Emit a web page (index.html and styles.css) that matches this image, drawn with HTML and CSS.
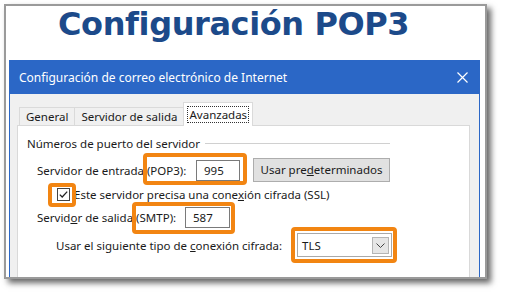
FILE: index.html
```html
<!DOCTYPE html>
<html lang="es">
<head>
<meta charset="utf-8">
<title>Configuración POP3</title>
<link rel="stylesheet" href="styles.css">
</head>
<body>
<div class="frame">
  <h1 class="heading">Configuración POP3</h1>
  <div class="dialog">
    <div class="titlebar">
      <span>Configuración de correo electrónico de Internet</span>
      <svg class="close" viewBox="0 0 11 11" aria-hidden="true"><path d="M0.5 0.5 L10.5 10.5 M10.5 0.5 L0.5 10.5" stroke="#fff" stroke-width="1.2" fill="none"/></svg>
    </div>
    <div class="body">
      <div class="tabs">
        <div class="tab">General</div>
        <div class="tab">Servidor de salida</div>
        <div class="tab active"><span class="focus">Avanzadas</span></div>
      </div>
      <div class="panel">
        <div class="group-title"><span>Números de puerto del servidor</span></div>
        <div class="row row-in">
          <span class="lbl lbl-in">Servidor de entrada (POP3):</span>
          <span class="field f-in">995</span>
          <span class="btn">Usar pre<u>d</u>eterminados</span>
        </div>
        <div class="row row-check">
          <span class="check"><svg viewBox="0 0 13 13" aria-hidden="true"><rect x="0.5" y="0.5" width="12" height="12" fill="#fff" stroke="#444"/><path d="M2.8 6.6 L5.2 9 L10.2 3.6" stroke="#222" stroke-width="1.3" fill="none"/></svg></span>
          <span>Este servidor precisa una cone<u>x</u>ión cifrada (SSL)</span>
        </div>
        <div class="row row-out">
          <span class="lbl lbl-out">Servid<u>o</u>r de salida (SMTP):</span>
          <span class="field f-out">587</span>
        </div>
        <div class="row row-enc">
          <span class="lbl lbl-enc">Usar el siguiente tipo de <u>c</u>onexión cifrada:</span>
          <span class="select"><span>TLS</span><span class="drop"><svg viewBox="0 0 9 5" aria-hidden="true"><path d="M0.5 0.5 L4.5 4.5 L8.5 0.5" stroke="#444" stroke-width="1" fill="none"/></svg></span></span>
        </div>
        <div class="hl hl1"></div>
        <div class="hl hl2"></div>
        <div class="hl hl3"></div>
        <div class="hl hl4"></div>
      </div>
    </div>
  </div>
</div>
</body>
</html>
```

FILE: styles.css
```css
* { box-sizing: border-box; }
html, body { margin: 0; background: #fff; }
body {
  width: 505px;
  height: 297px;
  overflow: hidden;
  font-family: "Noto Sans", "Open Sans", sans-serif;
  font-size: 11.5px;
  color: #1a1a1a;
}
.frame {
  margin: 4px 0 0 4px;
  width: 483px;
  height: 275px;
  border: 2px solid #9a9a9a;
  box-shadow: 4px 4px 6px rgba(0, 0, 0, 0.6);
  background: #fff;
  overflow: hidden;
  display: flex;
  flex-direction: column;
}
.heading {
  margin: 0;
  flex: none;
  height: 54px;
  padding: 2px 0 0 52px;
  font: bold 32px/32px "DejaVu Sans", sans-serif;
  letter-spacing: -0.4px;
  color: #1c4a8a;
  white-space: nowrap;
}
.dialog {
  margin-left: 3px;
  width: 471px;
  flex: 1;
  border-left: 1px solid #2b67c6;
  border-right: 1px solid #2b67c6;
  display: flex;
  flex-direction: column;
  background: #f0f0f0;
}
.titlebar {
  flex: none;
  height: 34px;
  background: #2b67c6;
  color: #fff;
  display: flex;
  align-items: center;
  justify-content: space-between;
  padding: 0 11px 0 9px;
  font-size: 12px;
}
.close { width: 11px; height: 11px; display: block; }
.body {
  flex: 1;
  padding: 8px 9px 0 7px;
  display: flex;
  flex-direction: column;
}
.tabs {
  display: flex;
  align-items: flex-end;
  height: 23px;
  padding-left: 2px;
  flex: none;
}
.tab {
  height: 18px;
  padding: 0 6px;
  line-height: 17px;
  border: 1px solid #dadada;
  border-bottom: none;
  margin-right: -1px;
  background: #f0f0f0;
  white-space: nowrap;
}
.tab.active {
  height: 24px;
  padding: 3px 4px 0;
  background: #fff;
  position: relative;
  z-index: 1;
  margin-bottom: -1px;
}
.focus { outline: 1px dotted #333; outline-offset: 0; padding: 0 1px; }
.panel {
  flex: 1;
  background: #fff;
  border: 1px solid #d9d9d9;
  border-bottom: none;
  position: relative;
  padding: 9px 0 0 9px;
}
.group-title {
  width: 363px;
  height: 16px;
  display: flex;
  align-items: center;
  white-space: nowrap;
}
.group-title::after {
  content: "";
  flex: 1;
  height: 1px;
  background: #d0d0d0;
  margin-left: 5px;
}
.row {
  display: flex;
  align-items: center;
  white-space: nowrap;
  padding-left: 10px;
}
.lbl { flex: none; }
.row-in { margin-top: 7px; height: 24px; }
.lbl-in { width: 159px; }
.field {
  height: 21px;
  border: 1px solid #7a7a7a;
  padding-left: 7px;
  line-height: 19px;
  background: #fff;
}
.f-in { width: 44px; }
.btn {
  margin-left: 13px;
  width: 137px;
  height: 24px;
  background: #e1e1e1;
  border: 1px solid #adadad;
  text-align: center;
  line-height: 22px;
}
.row-check { margin-top: 2px; height: 20px; padding-left: 30px; }
.check { width: 13px; height: 13px; margin-right: 4px; display: block; }
.check svg { width: 13px; height: 13px; display: block; }
.row-out { margin-top: 2px; height: 23px; }
.lbl-out { width: 148px; }
.f-out { width: 45px; }
.row-enc { margin-top: 4px; height: 24px; padding-left: 29px; }
.lbl-enc { width: 241px; }
.select {
  width: 95px;
  height: 24px;
  border: 1px solid #a9a9a9;
  background: #fff;
  display: flex;
  align-items: center;
  justify-content: space-between;
  padding: 0 2px 0 4px;
}
.drop {
  width: 17px;
  height: 17px;
  background: #e6e6e6;
  border: 1px solid #b5b5b5;
  display: flex;
  align-items: center;
  justify-content: center;
}
.drop svg { width: 9px; height: 5px; display: block; }
.hl {
  position: absolute;
  border: 4px solid #f28512;
  border-radius: 4px;
}
.hl1 { left: 125px; top: 27px; width: 104px; height: 32px; }
.hl2 { left: 30px; top: 57px; width: 28px; height: 24px; }
.hl3 { left: 114px; top: 76px; width: 103px; height: 32px; }
.hl4 { left: 273px; top: 101px; width: 106px; height: 36px; }
```
